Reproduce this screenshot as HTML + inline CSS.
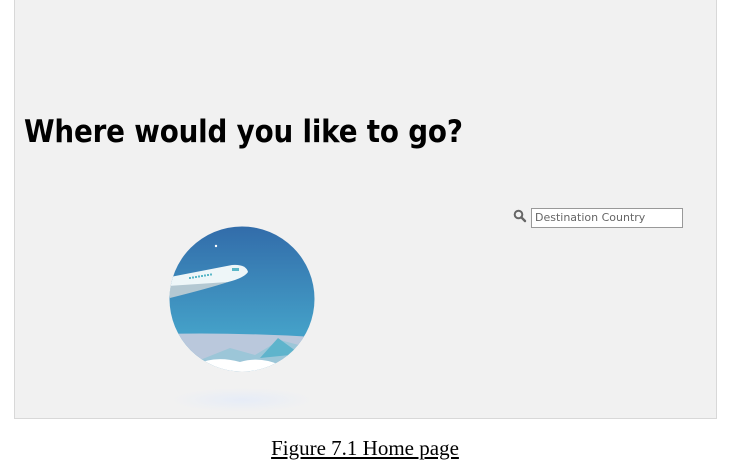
<!DOCTYPE html>
<html><head><style>
body{margin:0;width:732px;height:473px;background:#fff;position:relative;overflow:hidden;font-family:"Liberation Sans",sans-serif}
.panel{position:absolute;left:14px;top:-1px;width:701px;height:418px;background:#f1f1f1;border:1px solid #d8d8d8}
h1{position:absolute;left:24px;top:114px;margin:0;font-size:31px;font-weight:bold;color:#000;letter-spacing:-0.2px;font-family:"DejaVu Sans","Liberation Sans",sans-serif;transform:scaleX(0.895);transform-origin:left}
.inp{position:absolute;left:531px;top:208px;border:1px solid #999;background:#fff;font-size:11px;color:#666;font-family:"DejaVu Sans",sans-serif;line-height:18px;padding-left:3px;box-sizing:border-box;width:152px;height:20px}
.cap{position:absolute;left:0;width:730px;top:436px;text-align:center;font-family:"Liberation Serif",serif;font-size:21px;text-decoration:underline}
</style></head><body>
<div class="panel"></div>
<h1>Where would you like to go?</h1>
<svg style="position:absolute;left:513px;top:209px" width="14" height="14" viewBox="0 0 14 14"><circle cx="5.5" cy="5.5" r="3.8" fill="none" stroke="#666" stroke-width="2"/><line x1="8.3" y1="8.3" x2="12" y2="12" stroke="#666" stroke-width="2.4" stroke-linecap="round"/></svg>
<div class="inp">Destination Country</div>
<svg style="position:absolute;left:160px;top:220px" width="170" height="200" viewBox="0 0 170 200">
<defs><linearGradient id="g" x1="0" y1="0" x2="0" y2="1"><stop offset="0" stop-color="#3169a8"/><stop offset="0.7" stop-color="#44a0c8"/></linearGradient>
<clipPath id="c"><circle cx="82" cy="79" r="72.5"/></clipPath>
<radialGradient id="s"><stop offset="0" stop-color="#e6ecf7"/><stop offset="1" stop-color="#f1f1f1"/></radialGradient></defs>
<ellipse cx="82" cy="180" rx="70" ry="12" fill="url(#s)"/>
<g clip-path="url(#c)">
<rect x="0" y="0" width="170" height="160" fill="url(#g)"/>
<path d="M0 114 Q80 112 170 118 L170 160 L0 160Z" fill="#bac8dc"/>
<path d="M40 140 L70 128 L95 135 L120 120 L150 128 L150 160 L40 160Z" fill="#9cc6d8"/>
<path d="M100 138 L118 118 L140 134 Z" fill="#5fb4cc"/>
<path d="M35 145 Q55 135 80 142 Q100 136 120 145 Q135 140 150 145 L150 160 L35 160Z" fill="#fff"/>
<path d="M5 58 L72 45 Q86 44 88 52 Q84 58 68 62 L10 76 Z" fill="#eef6f8"/>
<path d="M8 66 L68 62 Q50 68 10 78Z" fill="#b4c8d2"/>
<circle cx="56" cy="26" r="1.2" fill="#fff"/>
<g fill="#5bb8c8"><rect x="29" y="57" width="2" height="2"/><rect x="32" y="56.5" width="2" height="2"/><rect x="35" y="56" width="2" height="2"/><rect x="38" y="55.5" width="2" height="2"/><rect x="41" y="55" width="2" height="2"/><rect x="44" y="54.5" width="2" height="2"/><rect x="47" y="54" width="2" height="2"/><rect x="50" y="53.5" width="2" height="2"/><rect x="72" y="48" width="7" height="3"/></g>
</g></svg>
<div class="cap">Figure 7.1 Home page</div>
</body></html>
